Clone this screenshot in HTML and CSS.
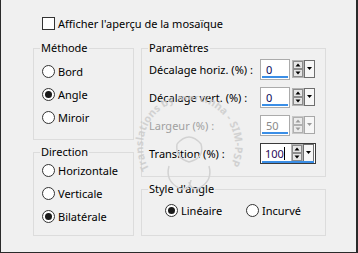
FILE: index.html
```html
<!DOCTYPE html>
<html lang="fr">
<head>
<meta charset="utf-8">
<link rel="stylesheet" href="styles.css">
</head>
<body>
<div class="frame">
  <div class="top">
    <span class="check"></span>
    <span class="lbl">Afficher l'aperçu de la mosaïque</span>
  </div>
  <div class="main">
    <div class="col left">
      <fieldset class="box methode">
        <legend>Méthode</legend>
        <div class="opts">
          <div class="opt"><span class="radio"></span><span class="lbl">Bord</span></div>
          <div class="opt"><span class="radio on"></span><span class="lbl">Angle</span></div>
          <div class="opt"><span class="radio"></span><span class="lbl">Miroir</span></div>
        </div>
      </fieldset>
      <fieldset class="box direction">
        <legend>Direction</legend>
        <div class="opts">
          <div class="opt"><span class="radio"></span><span class="lbl">Horizontale</span></div>
          <div class="opt"><span class="radio"></span><span class="lbl">Verticale</span></div>
          <div class="opt"><span class="radio on"></span><span class="lbl">Bilatérale</span></div>
        </div>
      </fieldset>
    </div>
    <div class="col right">
      <fieldset class="box params">
        <legend>Paramètres</legend>
        <div class="rows">
          <div class="row">
            <span class="rlabel">Décalage horiz. (%) :</span>
            <div class="widget">
              <span class="field"><span class="val">0</span></span>
              <svg class="spin" width="23" height="18" viewBox="0 0 23 18"><rect x="0.5" y="0.5" width="11" height="17" fill="#f4f4f4" stroke="#b4b4b4"/><rect x="1.5" y="1.5" width="9" height="7" fill="#e6e6e6" stroke="#8c8c8c"/><rect x="1.5" y="9.5" width="9" height="7" fill="#e6e6e6" stroke="#8c8c8c"/><path d="M6 3.5L8.5 6.5H3.5Z" fill="#000"/><path d="M3.5 11.5H8.5L6 14.5Z" fill="#000"/><rect x="12.5" y="0.5" width="10" height="17" fill="#f7f7f7" stroke="#6e6e6e"/><path d="M15 7H20L17.5 10Z" fill="#000"/></svg>
            </div>
          </div>
          <div class="row">
            <span class="rlabel">Décalage vert. (%) :</span>
            <div class="widget">
              <span class="field"><span class="val">0</span></span>
              <svg class="spin" width="23" height="18" viewBox="0 0 23 18"><rect x="0.5" y="0.5" width="11" height="17" fill="#f4f4f4" stroke="#b4b4b4"/><rect x="1.5" y="1.5" width="9" height="7" fill="#e6e6e6" stroke="#8c8c8c"/><rect x="1.5" y="9.5" width="9" height="7" fill="#e6e6e6" stroke="#8c8c8c"/><path d="M6 3.5L8.5 6.5H3.5Z" fill="#000"/><path d="M3.5 11.5H8.5L6 14.5Z" fill="#000"/><rect x="12.5" y="0.5" width="10" height="17" fill="#f7f7f7" stroke="#6e6e6e"/><path d="M15 7H20L17.5 10Z" fill="#000"/></svg>
            </div>
          </div>
          <div class="row disabled">
            <span class="rlabel">Largeur (%) :</span>
            <div class="widget">
              <span class="field"><span class="val">50</span></span>
              <svg class="spin" width="23" height="18" viewBox="0 0 23 18"><rect x="0.5" y="0.5" width="11" height="17" fill="#f4f4f4" stroke="#c8c8c8"/><rect x="1.5" y="1.5" width="9" height="7" fill="#ececec" stroke="#b0b0b0"/><rect x="1.5" y="9.5" width="9" height="7" fill="#ececec" stroke="#b0b0b0"/><path d="M6 3.5L8.5 6.5H3.5Z" fill="#9a9a9a"/><path d="M3.5 11.5H8.5L6 14.5Z" fill="#9a9a9a"/><rect x="12.5" y="0.5" width="10" height="17" fill="#f7f7f7" stroke="#a8a8a8"/><path d="M15 7H20L17.5 10Z" fill="#9a9a9a"/></svg>
            </div>
          </div>
          <div class="row">
            <span class="rlabel">Transition (%) :</span>
            <div class="widget focus">
              <span class="field"><span class="val">100</span><span class="caret"></span></span>
              <svg class="spin" width="23" height="18" viewBox="0 0 23 18"><rect x="0.5" y="0.5" width="11" height="17" fill="#f4f4f4" stroke="#b4b4b4"/><rect x="1.5" y="1.5" width="9" height="7" fill="#e6e6e6" stroke="#8c8c8c"/><rect x="1.5" y="9.5" width="9" height="7" fill="#e6e6e6" stroke="#8c8c8c"/><path d="M6 3.5L8.5 6.5H3.5Z" fill="#000"/><path d="M3.5 11.5H8.5L6 14.5Z" fill="#000"/><rect x="12.5" y="0.5" width="10" height="17" fill="#f7f7f7" stroke="#6e6e6e"/><path d="M15 7H20L17.5 10Z" fill="#000"/></svg>
            </div>
          </div>
        </div>
      </fieldset>
      <fieldset class="box style">
        <legend>Style d'angle</legend>
        <div class="hopts">
          <div class="opt"><span class="radio on"></span><span class="lbl">Linéaire</span></div>
          <div class="opt"><span class="radio"></span><span class="lbl">Incurvé</span></div>
        </div>
      </fieldset>
    </div>
  </div>
  <svg class="watermark" width="120" height="110" viewBox="0 0 120 110">
    <defs><path id="wm" d="M20.2 73 A46 46 0 1 1 99.8 73"/></defs>
    <text class="wmtext"><textPath href="#wm" textLength="188" lengthAdjust="spacing">Translations by Marcinha - SIM-PSP</textPath></text>
    <path d="M40 70 Q36 85 50 92 Q60 96 62 84 M80 70 Q84 85 70 92 Q62 95 60 86 M48 48 Q60 34 72 48 Q76 62 60 66 Q46 62 48 48" fill="none" stroke="#d2d2d2" stroke-width="1.5"/>
  </svg>
</div>
</body>
</html>
```
FILE: styles.css
```css
html, body {
  margin: 0;
  padding: 0;
  background: #f0f0f0;
}
body {
  font-family: "Noto Sans", "Open Sans", sans-serif;
  font-size: 11px;
  color: #000;
}
.frame {
  position: relative;
  width: 358px;
  height: 253px;
  box-sizing: border-box;
  border-left: 1px solid #2a2a2a;
  border-right: 2px solid #2a2a2a;
  border-bottom: 1px solid #2a2a2a;
  padding-left: 32px;
  overflow: hidden;
}
.top {
  display: flex;
  align-items: center;
  height: 13px;
  margin-top: 17px;
  padding-left: 9px;
}
.check {
  width: 13px;
  height: 13px;
  box-sizing: border-box;
  border: 1px solid #333;
  background: #fff;
  flex: none;
}
.lbl {
  margin-left: 3px;
  line-height: 16px;
  white-space: nowrap;
}
.main {
  display: flex;
  gap: 7px;
  margin-top: 10px;
}
.col {
  display: flex;
  flex-direction: column;
}
.left {
  width: 101px;
  gap: 4px;
}
.right {
  width: 185px;
  gap: 4px;
}
.box {
  margin: 0;
  padding: 0;
  border: 1px solid #dcdcdc;
  min-width: 0;
  box-sizing: border-box;
}
.box legend {
  margin-left: 6px;
  padding: 0 1px;
  line-height: 16px;
  height: 16px;
}
.opts {
  display: flex;
  flex-direction: column;
  padding-left: 8px;
}
.opt {
  display: flex;
  align-items: center;
  height: 23px;
}
.methode .opts {
  padding-top: 4px;
  padding-bottom: 10px;
}
.direction .opts {
  margin-top: -1px;
  padding-bottom: 7px;
}
.radio {
  width: 13px;
  height: 13px;
  box-sizing: border-box;
  border: 1px solid #333;
  border-radius: 50%;
  background: #fff;
  display: inline-flex;
  align-items: center;
  justify-content: center;
  flex: none;
}
.radio.on::after {
  content: "";
  width: 7px;
  height: 7px;
  border-radius: 50%;
  background: #1a1a1a;
}
.rows {
  display: flex;
  flex-direction: column;
  gap: 7px;
  padding: 3px 0 12px 7px;
}
.row {
  display: flex;
  align-items: center;
  height: 21px;
}
.rlabel {
  width: 111px;
  flex: none;
  white-space: nowrap;
  line-height: 16px;
}
.row.disabled .rlabel {
  color: #a0a0a0;
}
.widget {
  display: flex;
  align-items: flex-start;
  height: 21px;
  width: 56px;
  box-sizing: border-box;
  position: relative;
}
.field {
  width: 30px;
  height: 21px;
  box-sizing: border-box;
  border: 1px solid #ababab;
  background: #fff;
  display: flex;
  align-items: center;
  padding-left: 5px;
  position: relative;
}
.field::after {
  content: "";
  position: absolute;
  left: 1px;
  right: 1px;
  bottom: 1px;
  height: 2px;
  background: #3a8ee6;
}
.val {
  color: #0a0a5a;
  line-height: 16px;
}
.row.disabled .val {
  color: #8a8a8a;
}
.spin {
  display: block;
  margin-left: 2px;
  margin-top: 1px;
  flex: none;
}
.widget.focus {
  border: 1px solid #3a3a3a;
  background: #fff;
}
.widget.focus .field {
  border: none;
  height: 19px;
  width: 29px;
  padding-left: 4px;
}
.widget.focus .field::after {
  display: none;
}
.widget.focus::after {
  content: "";
  position: absolute;
  left: 1px;
  right: 1px;
  bottom: 0;
  height: 2px;
  background: #3a8ee6;
}
.widget.focus .spin {
  margin-top: 0;
  margin-left: 1px;
}
.widget.focus .val {
  color: #2a0a5a;
}
.caret {
  width: 1px;
  height: 13px;
  background: #000;
}
.hopts {
  display: flex;
  padding: 2px 0 13px 23px;
}
.hopts .opt:first-child {
  width: 81px;
}
.watermark {
  position: absolute;
  left: 128px;
  top: 96px;
  pointer-events: none;
}
.wmtext {
  font-family: "Noto Sans", sans-serif;
  font-size: 10.5px;
  font-weight: bold;
  fill: #cacaca;
  opacity: 0.8;
}
```
